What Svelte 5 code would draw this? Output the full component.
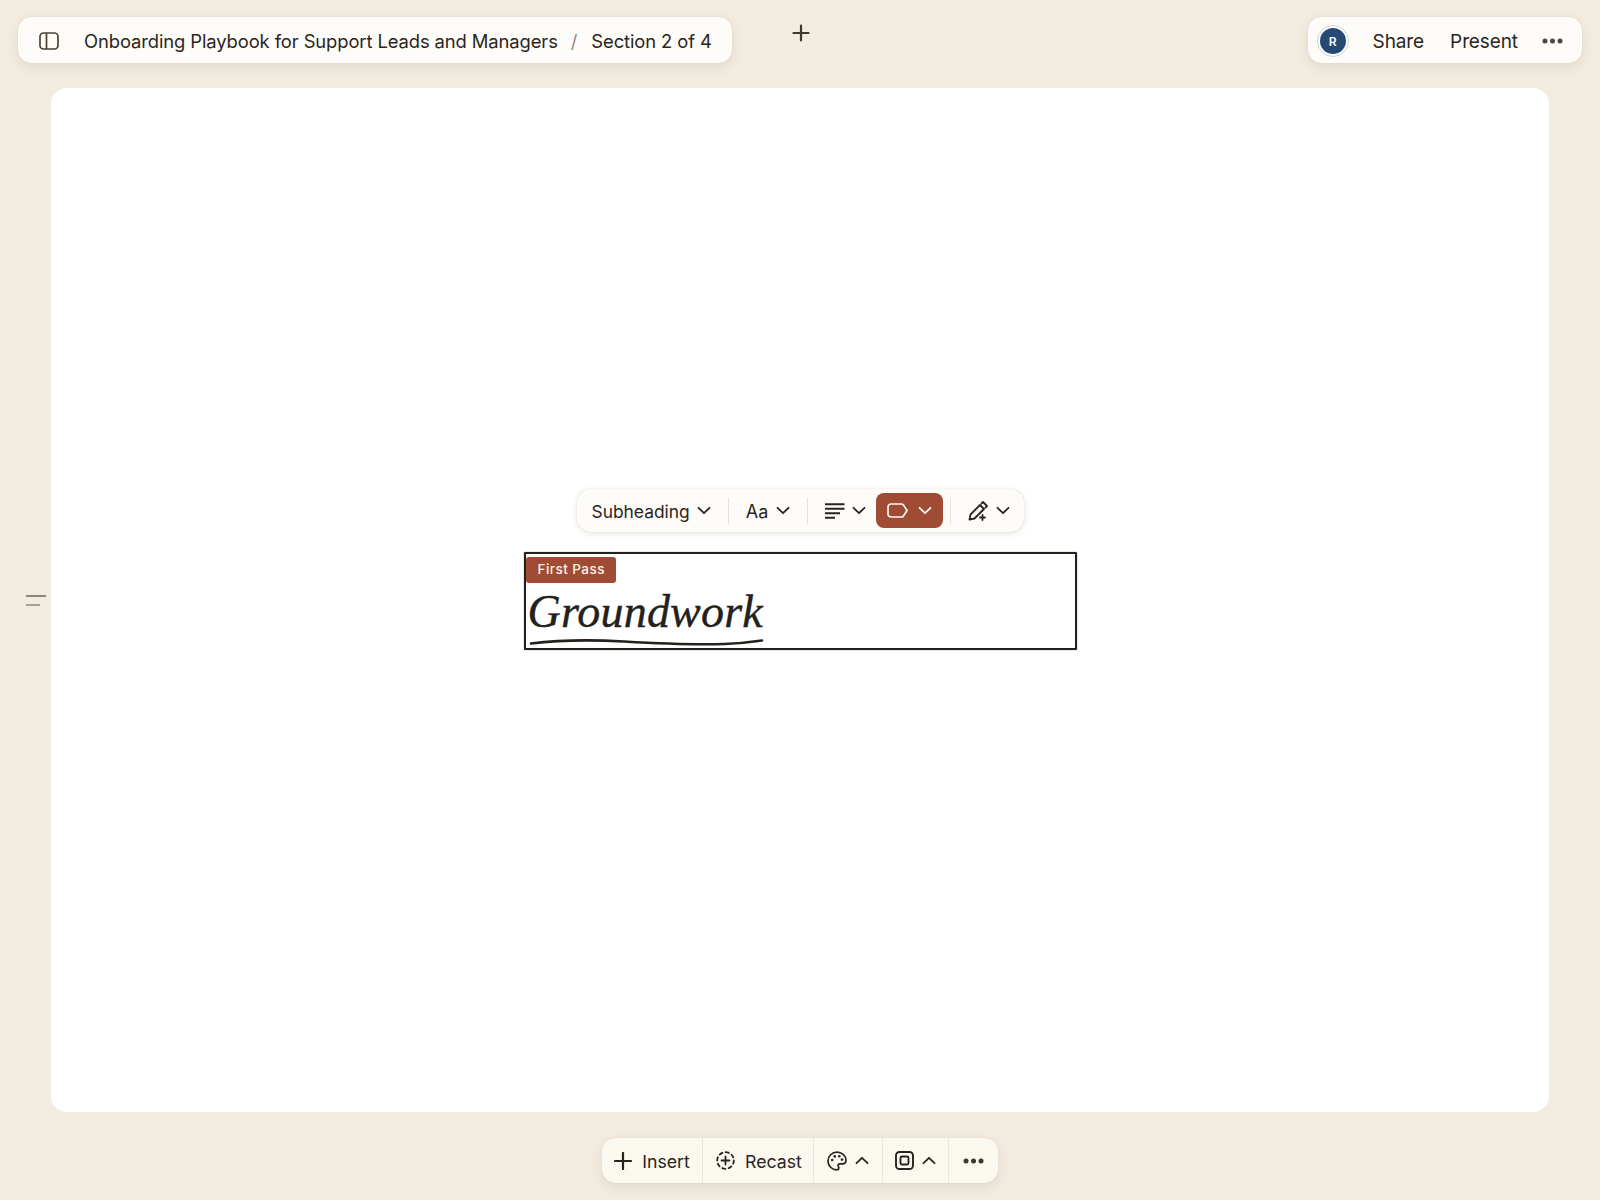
<script>
  const crumbs = ['Onboarding Playbook for Support Leads and Managers', 'Section 2 of 4']
</script>

{#snippet chevron(up = false)}
  <svg class="chev" width="14" height="9" viewBox="0 0 14 9" fill="none" stroke="currentColor" stroke-width="1.8" stroke-linecap="round" stroke-linejoin="round">
    <path d={up ? 'M1.5 7.2 7 1.8l5.5 5.4' : 'M1.5 1.8 7 7.2l5.5-5.4'} />
  </svg>
{/snippet}

{#snippet dots()}
  <svg width="21" height="6" viewBox="0 0 21 6" fill="currentColor">
    <circle cx="3" cy="3" r="2.5" /><circle cx="10.5" cy="3" r="2.5" /><circle cx="18" cy="3" r="2.5" />
  </svg>
{/snippet}

<div class="page">
  <header>
    <nav class="bar crumbs">
      <svg class="side-icon" width="20" height="18" viewBox="0 0 20 18" fill="none" stroke="#4a4333" stroke-width="1.7">
        <rect x="1" y="1" width="18" height="16" rx="3.5" />
        <path d="M7.5 1v16" />
      </svg>
      <span>{crumbs[0]}</span>
      <span class="slash">/</span>
      <span>{crumbs[1]}</span>
    </nav>
    <button class="add" aria-label="Add">
      <svg width="18" height="18" viewBox="0 0 18 18" stroke="#3d3a32" stroke-width="2.2" stroke-linecap="round"><path d="M9 1.5v15M1.5 9h15" /></svg>
    </button>
    <div class="bar actions">
      <span class="avatar"><span>R</span></span>
      <span class="share">Share</span>
      <span class="present">Present</span>
      <span class="more">{@render dots()}</span>
    </div>
  </header>

  <main class="canvas">
    <div class="handle"><i></i><i></i></div>
    <div class="block">
      <div class="toolbar">
        <span class="tool first"><span class="label">Subheading</span> {@render chevron()}</span>
        <span class="sep"></span>
        <span class="tool aa"><span class="label">Aa</span> {@render chevron()}</span>
        <span class="sep"></span>
        <span class="tool align">
          <svg width="20" height="16" viewBox="0 0 20 16" stroke="#26241f" stroke-width="1.9"><path d="M0 1.2h19.500M0 5.800h19.500M0 10.300h15M0 14.800h10" /></svg>
          {@render chevron()}
        </span>
        <span class="tool active">
          <svg width="21" height="15" viewBox="0 0 21 15" fill="none" stroke="#fff6ec" stroke-width="1.7" stroke-linejoin="round"><path d="M4 1h10.500c.8 0 1.400.3 1.900.9L20 7.500l-3.600 5.600c-.5.6-1.100.9-1.900.9H4a3 3 0 0 1-3-3V4a3 3 0 0 1 3-3Z" /></svg>
          {@render chevron()}
        </span>
        <span class="sep"></span>
        <span class="tool pen">
          <svg width="20" height="20" viewBox="0 0 20 20" fill="none" stroke="#26241f" stroke-width="1.8" stroke-linecap="round" stroke-linejoin="round">
            <path d="M1.500 18.500l1-5L12 4l4 4-9.500 9.500-5 1ZM13.500 2.500 15 1l4 4-1.500 1.500" />
            <path d="M14.500 14v5M12 16.500h5" />
          </svg>
          {@render chevron()}
        </span>
      </div>
      <span class="badge">First Pass</span>
      <h2 class="title">Groundwork</h2>
      <svg class="underline" width="236" height="10" viewBox="0 0 236 10" fill="none" stroke="#23211c" stroke-width="2.600" stroke-linecap="round">
        <path d="M2 6.500C30 3 60 2.500 95 4.500s70 3.500 100 2.500c16-.5 28-2 38-3.500" />
      </svg>
    </div>
  </main>

  <footer class="dock">
    <span class="cell insert">
      <svg width="18" height="18" viewBox="0 0 18 18" stroke="#26241f" stroke-width="2.200" stroke-linecap="round"><path d="M9 1v16M1 9h16" /></svg>
      <span class="label">Insert</span>
    </span>
    <span class="cell recast">
      <svg width="19" height="19" viewBox="0 0 19 19" fill="none" stroke="#26241f" stroke-width="1.8" stroke-linecap="round">
        <circle cx="9.500" cy="9.500" r="8.300" stroke-dasharray="3.200 3.300" />
        <path d="M9.500 5.500v8M5.500 9.500h8" />
      </svg>
      <span class="label">Recast</span>
    </span>
    <span class="cell palette">
      <svg width="20" height="20" viewBox="0 0 20 20" fill="none" stroke="#26241f" stroke-width="1.700" stroke-linejoin="round">
        <path d="M10 1.200c-5 0-9 3.900-9 8.800s4 8.800 8.600 8.800c1.500 0 2.200-1 2.200-2.100 0-.6-.3-1-.5-1.500-.3-.5-.4-1.100 0-1.700.4-.6 1-.7 1.800-.7h2.200c2.100 0 3.700-1.500 3.700-3.600 0-4.500-4-8-9-8Z" />
        <g fill="#26241f" stroke="none">
          <circle cx="5.200" cy="9" r="1.300" /><circle cx="7.800" cy="5.400" r="1.300" /><circle cx="12.300" cy="5.200" r="1.300" /><circle cx="15" cy="8.600" r="1.300" />
        </g>
      </svg>
      {@render chevron(true)}
    </span>
    <span class="cell frame">
      <svg width="19" height="19" viewBox="0 0 19 19" fill="none" stroke="#26241f" stroke-width="1.900">
        <rect x="1" y="1" width="17" height="17" rx="3.500" />
        <rect x="5.500" y="5.500" width="8" height="8" rx="1.500" />
      </svg>
      {@render chevron(true)}
    </span>
    <span class="cell more-cell">{@render dots()}</span>
  </footer>
</div>

<style>
  :global(body) {
    margin: 0;
    background: #f2ebdf;
    color: #2a261e;
    font-family: Inter, "Liberation Sans", sans-serif;
  }
  .page {
    width: 1600px;
    height: 1200px;
    box-sizing: border-box;
    padding-top: 17px;
    overflow: hidden;
  }
  header {
    display: grid;
    grid-template-columns: 1fr auto 1fr;
    padding: 0 18px;
    height: 46px;
  }
  .bar {
    display: flex;
    align-items: center;
    height: 46px;
    box-sizing: border-box;
    padding-top: 2px;
    background: #fefcf8;
    border-radius: 14px;
    box-shadow: 0 4px 12px rgba(90, 75, 50, 0.1), 0 0 2px rgba(90, 75, 50, 0.08);
    font-size: 19px;
    letter-spacing: -0.1px;
  }
  .crumbs {
    justify-self: start;
    padding-left: 21px;
    padding-right: 20px;
    font-size: 18.4px;
  }
  .side-icon {
    margin-right: 25px;
  }
  .slash {
    color: #8d897e;
    margin: 0 14px 0 13px;
  }
  .add {
    all: unset;
    align-self: start;
    margin-top: 7px;
    margin-left: 1px;
    line-height: 0;
  }
  .actions {
    justify-self: end;
    padding-left: 9px;
    padding-right: 19px;
  }
  .avatar {
    display: flex;
    align-items: center;
    justify-content: center;
    width: 32px;
    height: 32px;
    box-sizing: border-box;
    border: 1px solid #cfd5dc;
    border-radius: 50%;
    background: #fff;
  }
  .avatar span {
    display: flex;
    align-items: center;
    justify-content: center;
    width: 26px;
    height: 26px;
    border-radius: 50%;
    background: #264a73;
    color: #fff;
    font-size: 12px;
    font-weight: 600;
  }
  .share {
    margin-left: 24px;
  }
  .present {
    margin-left: 26px;
  }
  .more {
    margin-left: 24px;
    line-height: 0;
    color: #4a4640;
  }
  .canvas {
    position: relative;
    display: flex;
    align-items: center;
    justify-content: center;
    box-sizing: border-box;
    height: 1024px;
    margin: 25px 51px 0;
    background: #fff;
    border-radius: 16px;
  }
  .handle {
    position: absolute;
    left: -25px;
    top: 507px;
    display: flex;
    flex-direction: column;
    gap: 7px;
  }
  .handle i {
    display: block;
    width: 20px;
    height: 2px;
    background: #8a8578;
  }
  .handle i + i {
    width: 14px;
    background: #a5a194;
  }
  .block {
    position: relative;
    width: 553px;
    height: 98px;
    margin-top: 2px;
    box-sizing: border-box;
    border: 2px solid #23211c;
    box-shadow: 0 0 1px #23211c;
    padding: 3px 0 0;
    border-radius: 1px;
  }
  .badge {
    display: block;
    width: 90px;
    box-sizing: border-box;
    padding: 0 11px 0 12px;
    height: 26px;
    line-height: 25px;
    background: #a04b33;
    color: #fdf3ea;
    font-size: 13.500px;
    font-weight: 500;
    letter-spacing: 0.45px;
    white-space: nowrap;
    border-radius: 3px;
  }
  .title {
    margin: 3px 0 0 2px;
    font-family: "Liberation Serif", serif;
    font-style: italic;
    font-weight: 400;
    font-size: 46px;
    line-height: 52px;
    letter-spacing: 0.2px;
    -webkit-text-stroke: 0.4px #23211c;
    color: #23211c;
  }
  .underline {
    position: absolute;
    left: 3px;
    bottom: 1px;
  }
  .toolbar {
    position: absolute;
    left: 51px;
    top: -65px;
    display: flex;
    align-items: center;
    width: 447px;
    height: 43px;
    box-sizing: border-box;
    background: #fefcf9;
    border-radius: 14px;
    box-shadow: 0 2px 7px rgba(80, 70, 50, 0.12), 0 0 1px rgba(80, 70, 50, 0.25);
    font-size: 17.400px;
  }
  .tool {
    display: inline-flex;
    align-items: center;
    height: 35px;
    white-space: nowrap;
  }
  .first {
    padding: 0 0 0 15px;
    gap: 7px;
  }
  .aa {
    gap: 8px;
    font-size: 18px;
  }
  .align {
    gap: 7px;
  }
  .active {
    width: 67px;
    box-sizing: border-box;
    justify-content: center;
    gap: 10px;
    margin-left: 10px;
    background: #a04b33;
    color: #fff6ec;
    border-radius: 8px;
  }
  .pen {
    gap: 8px;
  }
  .sep {
    width: 1px;
    height: 26px;
    background: #e7e3da;
    margin: 0 17px;
  }
  .active + .sep {
    margin: 0 17px 0 7px;
  }
  .dock {
    display: flex;
    width: 396px;
    height: 45px;
    margin: 26px auto 0;
    background: #fbf8ef;
    border-radius: 14px;
    box-shadow: 0 4px 12px rgba(90, 75, 50, 0.1), 0 0 2px rgba(90, 75, 50, 0.08);
    font-size: 17.700px;
  }
  .cell {
    display: flex;
    align-items: center;
    justify-content: center;
    box-sizing: border-box;
    border-right: 1px solid #ece7db;
    white-space: nowrap;
  }
  .label {
    padding-top: 2px;
  }
  .insert {
    width: 101px;
    gap: 10px;
  }
  .recast {
    width: 111px;
    gap: 10px;
    padding-left: 2px;
  }
  .palette,
  .frame {
    gap: 8px;
  }
  .palette {
    width: 69px;
  }
  .frame {
    width: 66px;
  }
  .more-cell {
    flex: 1;
    border-right: 0;
    line-height: 0;
    color: #3a3731;
  }
</style>
